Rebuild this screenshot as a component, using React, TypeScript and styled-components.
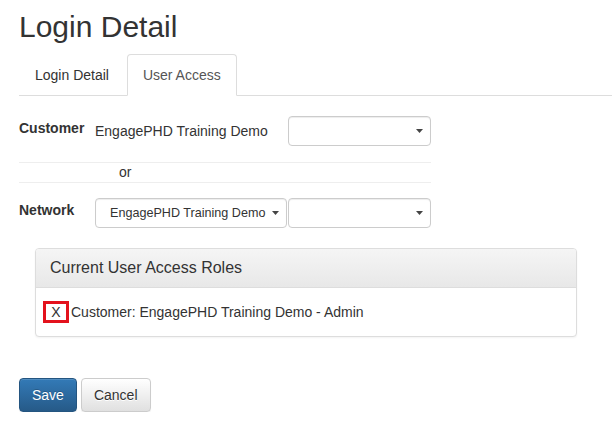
import React from 'react';
import styled, { createGlobalStyle, css } from 'styled-components';

const GlobalStyle = createGlobalStyle`
  html, body { margin: 0; padding: 0; background: #fff; }
  body {
    font-family: "Liberation Sans", Arial, Helvetica, sans-serif;
    font-size: 14px;
    line-height: 1.42857;
    color: #333;
  }
  * { box-sizing: border-box; }
`;

const Page = styled.div`
  width: 612px;
  padding: 0 0 0 19px;
`;

const Title = styled.h2`
  margin: 10px 0 11px;
  font-size: 30px;
  font-weight: normal;
  line-height: 33px;
  color: #333;
`;

const Tabs = styled.ul`
  display: flex;
  list-style: none;
  margin: 0;
  padding: 0;
  border-bottom: 1px solid #ddd;
`;

const Tab = styled.li<{ $active?: boolean }>`
  margin: 0 2px -1px 0;
  padding: 10px 15px;
  line-height: 20px;
  border: 1px solid transparent;
  border-radius: 4px 4px 0 0;
  color: #333;
  ${(p) =>
    p.$active &&
    css`
      border-color: #ddd #ddd transparent;
      background: #fff;
      color: #555;
    `}
`;

const Form = styled.div`
  margin-top: 20px;
`;

const FormRow = styled.div`
  display: grid;
  grid-template-columns: 76px 193px 143px;
  align-items: center;
  height: 30px;
`;

const Label = styled.div`
  align-self: start;
  padding-top: 2px;
  font-weight: bold;
  line-height: 20px;
`;

const StaticText = styled.div`
  line-height: 20px;
`;

const Divider = styled.div`
  width: 412px;
  height: 21px;
  margin: 16px 0 15px;
  padding-left: 100px;
  border-top: 1px solid #eee;
  border-bottom: 1px solid #eee;
  line-height: 19px;
`;

const SelectWrap = styled.div<{ $width: number }>`
  position: relative;
  width: ${(p) => p.$width}px;
  height: 30px;
`;

const Select = styled.select<{ $small?: boolean }>`
  appearance: none;
  -webkit-appearance: none;
  display: block;
  width: 100%;
  height: 30px;
  margin: 0;
  padding: 0 10px 0 14px;
  font-family: inherit;
  font-size: ${(p) => (p.$small ? '12.6px' : '14px')};
  color: #333;
  background: #fff;
  border: 1px solid #ccc;
  border-radius: 4px;
  box-shadow: inset 0 1px 1px rgba(0, 0, 0, 0.075);
  outline: none;
`;

const Caret = styled.svg`
  position: absolute;
  right: 8px;
  top: 13px;
  width: 7px;
  height: 4px;
  pointer-events: none;
`;

const Panel = styled.div`
  width: 542px;
  margin: 20px 0 0 16px;
  border: 1px solid #ddd;
  border-radius: 4px;
  background: #fff;
  box-shadow: 0 1px 2px rgba(0, 0, 0, 0.05);
`;

const PanelHeading = styled.div`
  padding: 10px 15px 10px 14px;
  border-bottom: 1px solid #ddd;
  border-radius: 3px 3px 0 0;
  background: linear-gradient(to bottom, #f5f5f5 0%, #e8e8e8 100%);
`;

const PanelTitle = styled.h3`
  margin: 0;
  font-size: 16px;
  font-weight: normal;
  line-height: 1.1;
  color: #333;
`;

const PanelBody = styled.div`
  display: flex;
  align-items: center;
  padding: 13px 15px 13px 7px;
`;

const RemoveBox = styled.span`
  display: flex;
  align-items: center;
  justify-content: center;
  width: 26px;
  height: 22px;
  border: 3px solid #e3121d;
  font-size: 14px;
  line-height: 1;
  color: #333;
`;

const RoleText = styled.span`
  margin-left: 2px;
  line-height: 20px;
`;

const ButtonBar = styled.div`
  display: flex;
  gap: 4px;
  margin-top: 41px;
`;

const Button = styled.button<{ $primary?: boolean }>`
  padding: 6px 12px;
  font-family: inherit;
  font-size: 14px;
  line-height: 20px;
  border-radius: 4px;
  border: 1px solid;
  cursor: pointer;
  ${(p) =>
    p.$primary
      ? css`
          color: #fff;
          border-color: #245580;
          background: linear-gradient(to bottom, #337ab7 0%, #265a88 100%);
          text-shadow: 0 -1px 0 rgba(0, 0, 0, 0.2);
          box-shadow: inset 0 1px 0 rgba(255, 255, 255, 0.15), 0 1px 1px rgba(0, 0, 0, 0.075);
        `
      : css`
          color: #333;
          border-color: #ccc;
          background: linear-gradient(to bottom, #fff 0%, #e0e0e0 100%);
          text-shadow: 0 1px 0 #fff;
          box-shadow: inset 0 1px 0 rgba(255, 255, 255, 0.15), 0 1px 1px rgba(0, 0, 0, 0.075);
        `}
`;

const Dropdown: React.FC<{ width: number; value?: string; small?: boolean }> = ({ width, value, small }) => (
  <SelectWrap $width={width}>
    <Select $small={small} defaultValue={value ? 'v' : ''}>
      {value ? <option value="v">{value}</option> : <option value=""></option>}
    </Select>
    <Caret viewBox="0 0 7 4">
      <path d="M0 0 H7 L3.5 4 Z" fill="#444" />
    </Caret>
  </SelectWrap>
);

export default function App() {
  return (
    <>
      <GlobalStyle />
      <Page>
        <Title>Login Detail</Title>
        <Tabs>
          <Tab>Login Detail</Tab>
          <Tab $active>User Access</Tab>
        </Tabs>
        <Form>
          <FormRow>
            <Label>Customer</Label>
            <StaticText>EngagePHD Training Demo</StaticText>
            <Dropdown width={143} />
          </FormRow>
          <Divider>or</Divider>
          <FormRow>
            <Label>Network</Label>
            <Dropdown width={192} value="EngagePHD Training Demo" small />
            <Dropdown width={143} />
          </FormRow>
        </Form>
        <Panel>
          <PanelHeading>
            <PanelTitle>Current User Access Roles</PanelTitle>
          </PanelHeading>
          <PanelBody>
            <RemoveBox>X</RemoveBox>
            <RoleText>Customer: EngagePHD Training Demo - Admin</RoleText>
          </PanelBody>
        </Panel>
        <ButtonBar>
          <Button $primary>Save</Button>
          <Button>Cancel</Button>
        </ButtonBar>
      </Page>
    </>
  );
}
